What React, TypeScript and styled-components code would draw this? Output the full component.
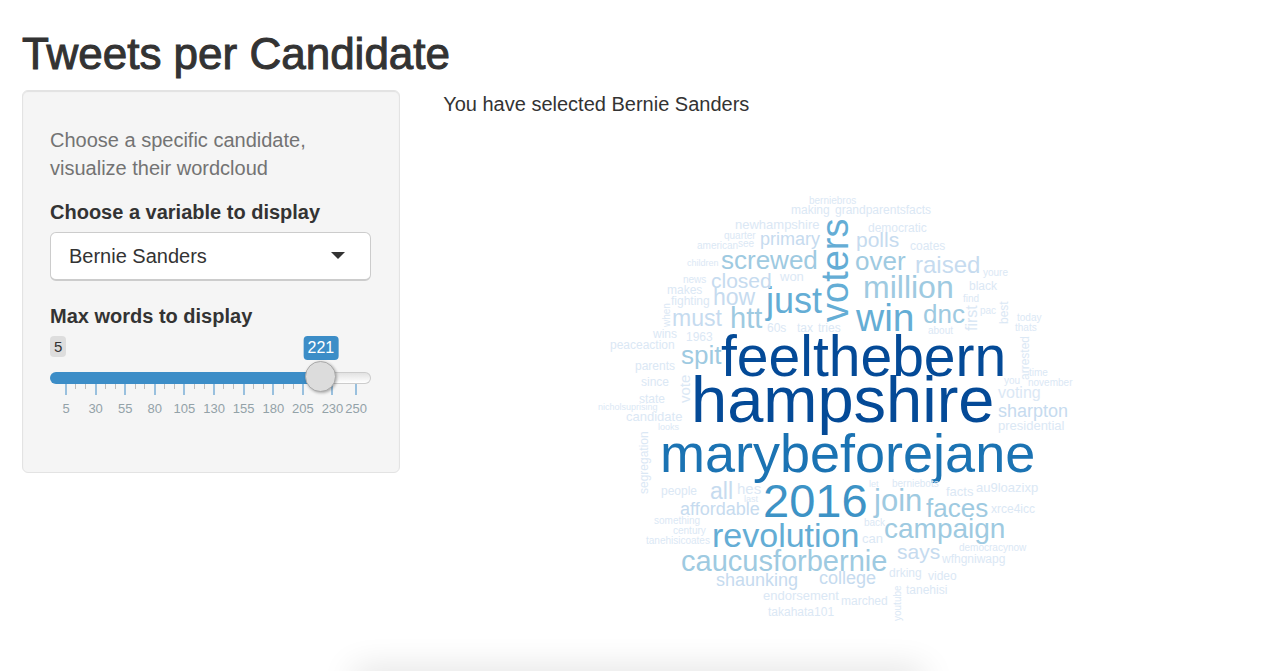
import React, { useState } from "react";
import styled, { createGlobalStyle } from "styled-components";

const Global = createGlobalStyle`
  * { box-sizing: border-box; }
  body {
    margin: 0;
    background: #fff;
    color: #333;
    font-family: "Liberation Sans", Arial, sans-serif;
    font-size: 20px;
    line-height: 28px;
  }
`;

const Page = styled.div`
  min-height: 100vh;
  padding: 30px 22px 0;
`;

const Title = styled.h1`
  margin: 0 0 12px;
  font-size: 44px;
  line-height: 48px;
  font-weight: 400;
  -webkit-text-stroke: 1px #333;
`;

const Layout = styled.div`
  display: flex;
  align-items: flex-start;
  gap: 43px;
`;

const Sidebar = styled.form`
  flex: 0 0 31%;
  min-height: 383px;
  padding: 35px 28px 56px 27px;
  background: #f5f5f5;
  border: 1px solid #e3e3e3;
  border-radius: 6px;
  box-shadow: inset 0 1px 1px rgba(0, 0, 0, 0.08);
`;

const HelpText = styled.p`
  margin: 0 0 16px;
  color: #737373;
`;

const Label = styled.label`
  display: block;
  margin-bottom: 6px;
  font-weight: 700;
`;

const SelectWrap = styled.div`
  position: relative;
  margin-bottom: 21px;
`;

const Select = styled.select`
  display: block;
  width: 100%;
  height: 49px;
  padding: 0 48px 0 18px;
  appearance: none;
  background: #fff;
  border: 1px solid #ccc;
  border-bottom-width: 2px;
  border-radius: 6px;
  color: #333;
  font: inherit;
`;

const Caret = styled.svg`
  position: absolute;
  top: 20px;
  right: 26px;
  pointer-events: none;
`;

const SliderTop = styled.div`
  position: relative;
  height: 26px;
`;

const MinBadge = styled.span`
  display: inline-block;
  padding: 0 4px;
  background: #ddd;
  border-radius: 4px;
  font-size: 15px;
  line-height: 21px;
  vertical-align: top;
`;

const ValueBadge = styled.output`
  position: absolute;
  top: 0;
  padding: 0 4px;
  transform: translateX(-50%);
  background: #3c8dc7;
  border-radius: 4px;
  color: #fff;
  font-size: 16px;
  line-height: 24px;
`;

const Range = styled.input`
  display: block;
  position: relative;
  z-index: 1;
  width: 100%;
  height: 31px;
  margin: 0;
  appearance: none;
  background: transparent;

  &::-webkit-slider-runnable-track {
    height: 12px;
    border: 1px solid #ccc;
    border-left-color: #3c8dc7;
    border-radius: 6px;
    background:
      linear-gradient(#3c8dc7, #3c8dc7) left / var(--fill) 100% no-repeat border-box,
      linear-gradient(#e2e2e2, #fff) padding-box,
      #ccc;
  }

  &::-webkit-slider-runnable-track {
    border-color: transparent;
  }

  &::-webkit-slider-thumb {
    appearance: none;
    width: 31px;
    height: 31px;
    margin-top: -12px;
    background: #dcdcdc;
    border: 1px solid #aaa;
    border-radius: 50%;
    box-shadow: 1px 1px 3px rgba(0, 0, 0, 0.3);
  }
`;

const ScaleWrap = styled.div`
  margin-top: -9px;
  padding: 0 15px 0 16px;
`;

const Scale = styled.svg`
  display: block;
  width: 100%;
  height: 32px;
  overflow: visible;
  font-size: 13px;
  fill: #93a2a8;
`;

const Main = styled.main`
  flex: 1;
  min-width: 0;
`;

const Selected = styled.p`
  margin: 0 0 42px;
`;

const Cloud = styled.svg`
  display: block;
  width: 500px;
  max-width: 100%;
  margin: 0 auto;
  height: auto;
`;

const DockShadow = styled.div`
  position: fixed;
  left: 28%;
  right: 27%;
  bottom: -20px;
  height: 20px;
  box-shadow: 0 0 34px rgba(0, 0, 0, 0.16);
`;

const MIN = 5;
const MAX = 250;
const MAJOR = [5, 30, 55, 80, 105, 130, 155, 180, 205, 230, 250];
const BLUES = ["#dbe8f5", "#c6dbef", "#9ecae1", "#64add5", "#3d93c6", "#1b73b3", "#044a97"];

// text, x, baseline y, size, shade index, vertical
type Word = [string, number, number, number, number, boolean?];

const WORDS: Word[] = [
  ["hampshire", 691, 422, 65, 6],
  ["feelthebern", 721, 376, 57, 6],
  ["marybeforejane", 660, 472, 54, 5],
  ["2016", 763, 517, 47, 4],
  ["win", 856, 331, 39, 3],
  ["voters", 848, 322, 38, 3, true],
  ["just", 766, 313, 36, 3],
  ["revolution", 712, 547, 34, 3],
  ["million", 863, 298, 32, 2],
  ["join", 874, 511, 31, 2],
  ["caucusforbernie", 681, 571, 29, 2],
  ["htt", 730, 328, 29, 2],
  ["campaign", 884, 538, 28, 2],
  ["faces", 926, 517, 26, 2],
  ["screwed", 721, 269, 26, 2],
  ["over", 855, 270, 26, 2],
  ["dnc", 923, 323, 26, 2],
  ["spit", 681, 364, 26, 2],
  ["raised", 915, 273, 24, 1],
  ["all", 710, 499, 23, 1],
  ["must", 672, 326, 23, 1],
  ["how", 713, 305, 23, 1],
  ["says", 897, 559, 21, 1],
  ["closed", 711, 288, 21, 1],
  ["polls", 856, 247, 21, 1],
  ["primary", 760, 245, 18, 1],
  ["shaunking", 716, 586, 18, 1],
  ["college", 819, 584, 18, 1],
  ["affordable", 680, 515, 18, 1],
  ["sharpton", 998, 417, 18, 1],
  ["first", 977, 331, 16, 0, true],
  ["vote", 690, 403, 15, 0, true],
  ["voting", 998, 398, 16, 0],
  ["hes", 737, 494, 15, 0],
  ["newhampshire", 735, 229, 13, 0],
  ["won", 780, 281, 13, 0],
  ["democratic", 868, 232, 12, 0],
  ["candidate", 626, 421, 13, 0],
  ["endorsement", 763, 600, 13, 0],
  ["can", 862, 543, 13, 0],
  ["facts", 946, 496, 13, 0],
  ["au9loazixp", 976, 492, 13, 0],
  ["presidential", 998, 430, 13, 0],
  ["making", 791, 214, 12, 0],
  ["grandparentsfacts", 835, 214, 12, 0],
  ["coates", 910, 250, 12, 0],
  ["black", 969, 290, 12, 0],
  ["best", 1008, 324, 12, 0, true],
  ["60s", 767, 332, 12, 0],
  ["tax", 797, 332, 12, 0],
  ["tries", 818, 332, 12, 0],
  ["makes", 667, 294, 12, 0],
  ["fighting", 671, 305, 12, 0],
  ["wins", 653, 338, 12, 0],
  ["1963", 686, 341, 12, 0],
  ["peaceaction", 610, 349, 12, 0],
  ["parents", 635, 370, 12, 0],
  ["since", 641, 386, 12, 0],
  ["state", 639, 403, 12, 0],
  ["segregation", 648, 494, 12, 0, true],
  ["people", 661, 495, 12, 0],
  ["marched", 841, 605, 12, 0],
  ["takahata101", 768, 616, 12, 0],
  ["tanehisi", 906, 594, 12, 0],
  ["video", 928, 580, 12, 0],
  ["drking", 889, 577, 12, 0],
  ["wfhgniwapg", 942, 563, 12, 0],
  ["xrce4icc", 991, 513, 12, 0],
  ["arrested", 1029, 380, 12, 0, true],
  ["berniebros", 809, 204, 10, 0],
  ["youre", 983, 276, 10, 0],
  ["find", 963, 302, 10, 0],
  ["pac", 980, 314, 10, 0],
  ["today", 1017, 321, 10, 0],
  ["thats", 1015, 331, 10, 0],
  ["about", 928, 334, 10, 0],
  ["quarter", 724, 239, 10, 0],
  ["american", 697, 249, 10, 0],
  ["see", 738, 247, 10, 0],
  ["news", 683, 283, 10, 0],
  ["when", 670, 327, 10, 0, true],
  ["something", 654, 524, 10, 0],
  ["century", 673, 534, 10, 0],
  ["tanehisicoates", 646, 544, 10, 0],
  ["youtube", 901, 621, 10, 0, true],
  ["democracynow", 959, 551, 10, 0],
  ["back", 864, 526, 10, 0],
  ["berniebots", 892, 487, 10, 0],
  ["time", 1029, 376, 10, 0],
  ["you", 1004, 384, 10, 0],
  ["november", 1028, 386, 10, 0],
  ["children", 687, 266, 9, 0],
  ["nicholsuprising", 598, 410, 9, 0],
  ["looks", 658, 430, 9, 0],
  ["last", 744, 502, 9, 0],
  ["let", 869, 487, 9, 0],
];

const at = (v: number) => `${((v - MIN) / (MAX - MIN)) * 100}%`;

function SliderScale() {
  const minor: number[] = [];
  MAJOR.slice(0, -2).forEach((v) => minor.push(v + 25 / 3, v + 50 / 3));
  return (
    <ScaleWrap>
      <Scale aria-hidden="true" shapeRendering="crispEdges">
        {minor.map((v) => (
          <line key={v} x1={at(v)} x2={at(v)} y1={0} y2={5} stroke="#bbb" />
        ))}
        {MAJOR.map((v) => (
          <g key={v}>
            <line x1={at(v)} x2={at(v)} y1={0} y2={11} stroke="#99c0de" strokeWidth={2} />
            <text x={at(v)} y={29} textAnchor="middle">{v}</text>
          </g>
        ))}
      </Scale>
    </ScaleWrap>
  );
}

export default function App() {
  const [candidate, setCandidate] = useState("Bernie Sanders");
  const [max, setMax] = useState(221);
  const ratio = (max - MIN) / (MAX - MIN);
  const center = `calc(15px + (100% - 31px) * ${ratio})`;

  return (
    <Page>
      <Global />
      <Title>Tweets per Candidate</Title>
      <Layout>
        <Sidebar>
          <HelpText>Choose a specific candidate, visualize their wordcloud</HelpText>
          <Label htmlFor="candidate">Choose a variable to display</Label>
          <SelectWrap>
            <Select id="candidate" value={candidate} onChange={(e) => setCandidate(e.target.value)}>
              <option>Bernie Sanders</option>
            </Select>
            <Caret width="14" height="7" viewBox="0 0 14 7" aria-hidden="true">
              <path d="M0 0h14L7 7z" fill="#333" />
            </Caret>
          </SelectWrap>
          <Label htmlFor="max-words">Max words to display</Label>
          <SliderTop>
            <MinBadge>{MIN}</MinBadge>
            <ValueBadge htmlFor="max-words" style={{ left: center }}>{max}</ValueBadge>
          </SliderTop>
          <Range
            id="max-words"
            type="range"
            min={MIN}
            max={MAX}
            value={max}
            onChange={(e) => setMax(Number(e.target.value))}
            style={{ "--fill": center } as React.CSSProperties}
          />
          <SliderScale />
        </Sidebar>
        <Main>
          <Selected>You have selected {candidate}</Selected>
          <Cloud viewBox="593 160 500 480" role="img" aria-label="Word cloud">
            {WORDS.map(([text, x, y, size, shade, vertical]) => (
              <text
                key={text}
                x={x}
                y={y}
                fontSize={size}
                fill={BLUES[shade]}
                transform={vertical ? `rotate(-90 ${x} ${y})` : undefined}
              >
                {text}
              </text>
            ))}
          </Cloud>
        </Main>
      </Layout>
      <DockShadow />
    </Page>
  );
}
